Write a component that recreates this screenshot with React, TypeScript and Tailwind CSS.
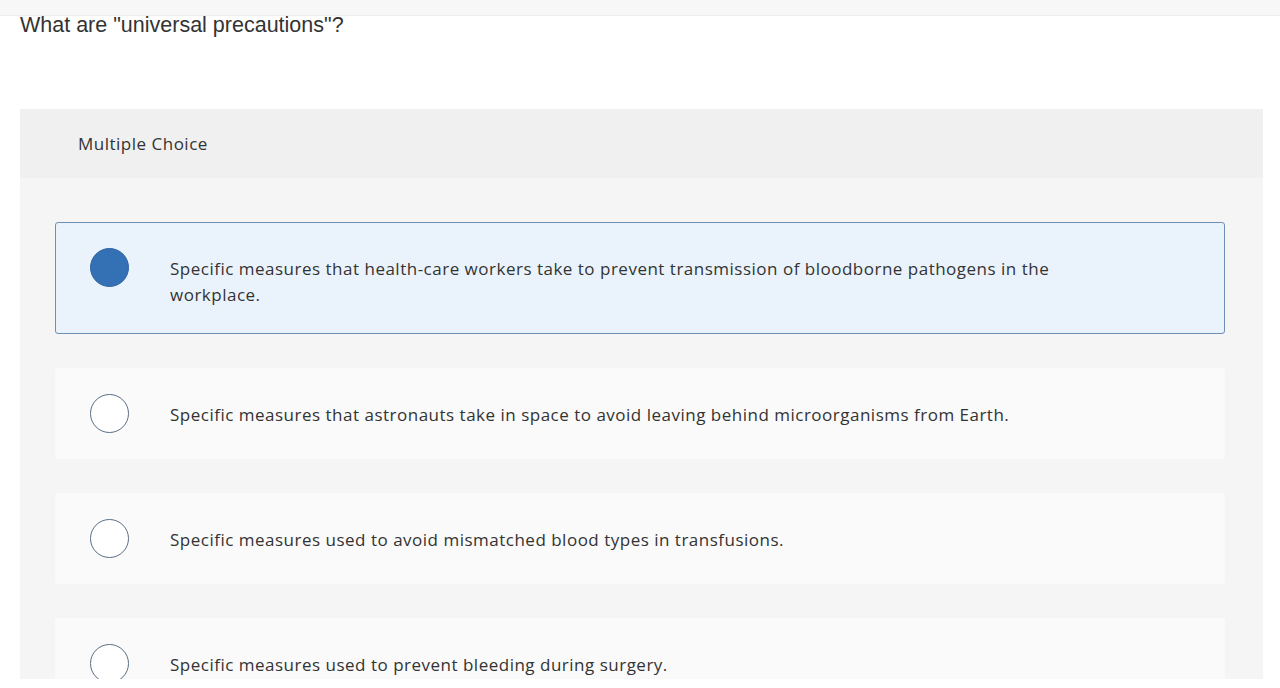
import React from "react";

// Question view: prompt on top, multiple-choice answers below.

const options = [
  "Specific measures that health-care workers take to prevent transmission of bloodborne pathogens in the workplace.",
  "Specific measures that astronauts take in space to avoid leaving behind microorganisms from Earth.",
  "Specific measures used to avoid mismatched blood types in transfusions.",
  "Specific measures used to prevent bleeding during surgery.",
];

function Radio({ checked }: { checked: boolean }) {
  return checked ? (
    <div className="h-[39px] w-[39px] shrink-0 rounded-full bg-[#3470b4] border border-[#2f64a2]" />
  ) : (
    <div className="h-[39px] w-[39px] shrink-0 rounded-full bg-white border-[1.5px] border-[#5a6f85]" />
  );
}

export default function App() {
  return (
    <div className="h-[688px] bg-white">
      <div
        className="h-[679px] overflow-hidden bg-white text-[#333]"
        style={{ fontFamily: "'Open Sans', Lato, sans-serif" }}
      >
        {/* Top strip */}
        <div className="h-4 bg-[#f7f7f7] border-b border-[#ededed]" />

        <div className="pl-5 pr-[17px]">
          <h1
            className="text-[21.5px] leading-[20px] mt-[-1px] font-normal text-[#333]"
            style={{ fontFamily: "'Liberation Sans', Arial, sans-serif" }}
          >
            What are "universal precautions"?
          </h1>

          <div className="mt-[74px] bg-[#f5f5f5] pb-10">
            {/* Header */}
            <div className="h-[69px] bg-[#f0f0f0] flex items-center pl-[58px] text-[17px] tracking-[0.5px]">
              Multiple Choice
            </div>

            {/* Options */}
            <div className="pl-[35px] pr-[38px] pt-[44px] flex flex-col gap-[34px]">
              {options.map((text, i) => (
                <div
                  key={i}
                  className={
                    i === 0
                      ? "flex items-start rounded-[3px] border border-[#6e8eb3] bg-[#eaf3fc] pl-[34px] pr-10 py-[25px]"
                      : "flex items-start rounded-[3px] border border-transparent bg-[#fafafa] pl-[34px] pr-10 py-[25px]"
                  }
                >
                  <Radio checked={i === 0} />
                  <p className="ml-[41px] pt-[8px] text-[17px] tracking-[0.5px] leading-[26px] max-w-[900px]">
                    {text}
                  </p>
                </div>
              ))}
            </div>
          </div>
        </div>
      </div>
    </div>
  );
}
